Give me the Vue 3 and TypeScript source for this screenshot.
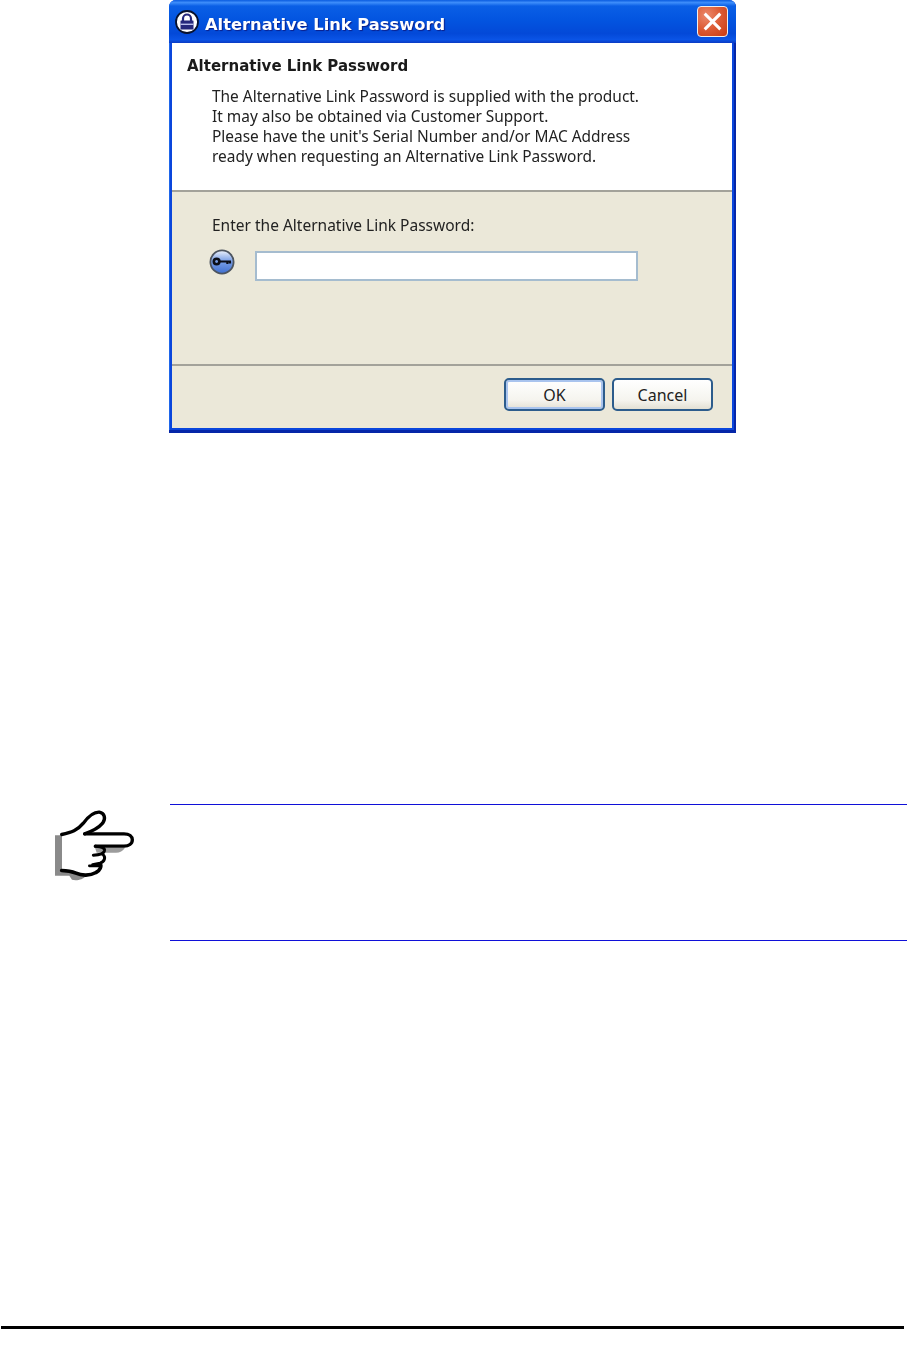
<script setup lang="ts">
const lines: string[] = [
  'The Alternative Link Password is supplied with the product.',
  'It may also be obtained via Customer Support.',
  "Please have the unit's Serial Number and/or MAC Address",
  'ready when requesting an Alternative Link Password.',
]
</script>

<template>
  <div class="page">
    <section class="window">
      <header class="titlebar">
        <svg class="lock" viewBox="0 0 24 24" width="24" height="24" aria-hidden="true">
          <circle cx="12" cy="12" r="11" fill="#fff" stroke="#07122f" stroke-width="1.8" />
          <path d="M8 11V8.5a4 4 0 0 1 8 0V11" fill="none" stroke="#26287c" stroke-width="2.2" />
          <rect x="5.5" y="10.5" width="13" height="9" rx="0.5" fill="#26287c" />
          <rect x="5.5" y="13.6" width="13" height="1.4" fill="#b9bdea" />
        </svg>
        <span class="title">Alternative Link Password</span>
        <div class="close" aria-label="Close">
          <svg viewBox="0 0 24 24" width="23" height="23" aria-hidden="true">
            <path d="M5 5L19 19M19 5L5 19" stroke="#fff" stroke-width="3.2" stroke-linecap="square" fill="none" />
          </svg>
        </div>
      </header>
      <div class="client">
        <div class="info">
          <h2>Alternative Link Password</h2>
          <p v-for="line in lines" :key="line">{{ line }}</p>
        </div>
        <div class="form">
          <label>Enter the Alternative Link Password:</label>
          <div class="field">
            <svg class="key" viewBox="0 0 26 26" width="26" height="26" aria-hidden="true">
              <defs>
                <linearGradient id="keyball" x1="0" y1="0" x2="0" y2="1">
                  <stop offset="0" stop-color="#eef3fc" />
                  <stop offset="0.45" stop-color="#7ba0e6" />
                  <stop offset="1" stop-color="#3f6fd0" />
                </linearGradient>
              </defs>
              <circle cx="13" cy="13" r="11.6" fill="url(#keyball)" stroke="#4d5560" stroke-width="1.8" />
              <circle cx="7.6" cy="12.5" r="2.8" fill="none" stroke="#0c0f18" stroke-width="2.6" />
              <path d="M10 12.5H22M18.4 12.5V15M21 12.5V14.6" stroke="#0c0f18" stroke-width="2.2" fill="none" />
            </svg>
            <div class="input"></div>
          </div>
        </div>
        <footer class="actions">
          <button class="btn default" type="button">OK</button>
          <button class="btn" type="button">Cancel</button>
        </footer>
      </div>
    </section>

    <section class="note">
      <svg class="hand" viewBox="45 45 240 215" width="80" height="72" aria-hidden="true">
        <path d="M45 120H66V226L100 234L136 244C130 252 112 258 96 254L88 242H45Z" fill="#8a8a8a" />
        <path d="M165 158H255C248 168 240 173 228 173H170Z" fill="#9c9c9c" />
        <path d="M65 118C95 112 112 106 130 84C145 64 160 50 178 51C194 54 198 70 188 84C176 98 158 108 134 116"
          fill="none" stroke="#000" stroke-width="10" stroke-linecap="round" />
        <path d="M134 116H252C268 116 277 124 277 134C277 146 266 153 252 153H166"
          fill="none" stroke="#000" stroke-width="10" stroke-linecap="round" />
        <path d="M166 153C186 155 196 158 193 168C190 177 176 179 160 180M189 178C198 186 194 200 180 204L158 209"
          fill="none" stroke="#000" stroke-width="9" stroke-linecap="round" />
        <path d="M180 206C186 212 180 226 168 232C150 242 125 242 108 234C94 228 80 226 65 226"
          fill="none" stroke="#000" stroke-width="11" stroke-linecap="round" />
        <path d="M148 212H182" fill="none" stroke="#000" stroke-width="8" stroke-linecap="round" />
      </svg>
      <div class="note-body"></div>
    </section>

    <div class="spacer"></div>
    <div class="foot-rule"></div>
  </div>
</template>

<style>
html, body { margin: 0; background: #fff; }
</style>

<style scoped>
.page {
  height: 1345px;
  display: flex;
  flex-direction: column;
  box-sizing: border-box;
  overflow: hidden;
  background: #fff;
  font-family: "Noto Sans", "DejaVu Sans", sans-serif;
}
.window {
  width: 567px;
  height: 433px;
  margin-left: 169px;
  box-sizing: border-box;
  display: flex;
  flex-direction: column;
  border-radius: 7px 7px 0 0;
  background: #0a46dc;
  box-shadow: inset -2px -3px 0 #0526a8, inset 1px 0 0 #1f66ea;
  overflow: hidden;
}
.titlebar {
  height: 43px;
  flex: none;
  display: flex;
  align-items: center;
  padding: 0 8px 0 6px;
  box-sizing: border-box;
  background: linear-gradient(180deg, #0a5ce0 0%, #3d8dfa 6%, #0a5fe6 14%, #0355e0 45%, #0349d8 78%, #0a54e6 92%, #0a3bc4 100%);
}
.lock { flex: none; margin-top: 1px; }
.title {
  margin-left: 6px;
  padding-top: 5px;
  color: #fff;
  font-family: "DejaVu Sans", sans-serif;
  font-size: 16.3px;
  font-weight: 700;
  text-shadow: 1px 1px 1px #0b1f8a;
  filter: blur(0.3px);
  white-space: nowrap;
}
.close {
  margin-left: auto;
  width: 31px;
  height: 31px;
  box-sizing: border-box;
  display: flex;
  align-items: center;
  justify-content: center;
  border: 1.5px solid #eee;
  border-radius: 4px;
  background: radial-gradient(circle at 30% 30%, #ec8a6c 0%, #dc5a33 50%, #c83a12 100%);
}
.client {
  flex: 1;
  margin: 0 4px 5px 3px;
  display: flex;
  flex-direction: column;
  background: #ebe8d9;
  min-height: 0;
}
.info {
  height: 149px;
  flex: none;
  box-sizing: border-box;
  padding: 11px 15px 0 15px;
  background: #fff;
  color: #222;
  border-bottom: 2px solid #a3a29a;
}
h2 {
  margin: 0 0 8px;
  font-family: "DejaVu Sans", sans-serif;
  font-size: 15px;
  line-height: 24px;
  font-weight: 700;
  color: #1a1a1a;
  filter: blur(0.25px);
}
.info p {
  margin: 0 0 0 25px;
  font-size: 15.45px;
  line-height: 20.1px;
  white-space: nowrap;
  filter: blur(0.25px);
}
.form {
  flex: 1;
  min-height: 0;
  box-sizing: border-box;
  padding: 22px 0 0 37px;
  border-bottom: 2px solid #a3a29a;
  color: #222;
}
.form label {
  display: block;
  margin-left: 3px;
  font-size: 15.5px;
  line-height: 22px;
  filter: blur(0.25px);
}
.field {
  display: flex;
  align-items: flex-start;
  gap: 20px;
  margin-top: 15px;
}
.key { flex: none; margin-top: -2px; }
.input {
  width: 383px;
  height: 30px;
  box-sizing: border-box;
  border: 2px solid #a5bccf;
  background: #fff;
}
.actions {
  height: 62px;
  flex: none;
  box-sizing: border-box;
  display: flex;
  justify-content: flex-end;
  gap: 7px;
  padding: 12px 19px 0 0;
}
.btn {
  width: 101px;
  height: 33px;
  padding: 0;
  box-sizing: border-box;
  border: 2px solid #2c5c8c;
  border-radius: 5px;
  background: linear-gradient(180deg, #fff 0%, #f5f4ee 70%, #e3e0d4 100%);
  color: #222;
  font-family: inherit;
  font-size: 16px;
  line-height: 1;
}
.default {
  box-shadow: inset 0 0 0 2px #a9c4ee;
}
.note {
  display: flex;
  align-items: flex-start;
  margin-top: 371px;
  margin-left: 55px;
}
.hand { flex: none; margin-top: 6px; }
.note-body {
  height: 137px;
  flex: 1;
  margin-left: 35px;
  box-sizing: border-box;
  border-top: 1px solid #1010d8;
  border-bottom: 1px solid #1010d8;
}
.spacer { flex: 1; }
.foot-rule {
  height: 3px;
  margin: 0 3px 16px 1px;
  background: #000;
}
</style>
